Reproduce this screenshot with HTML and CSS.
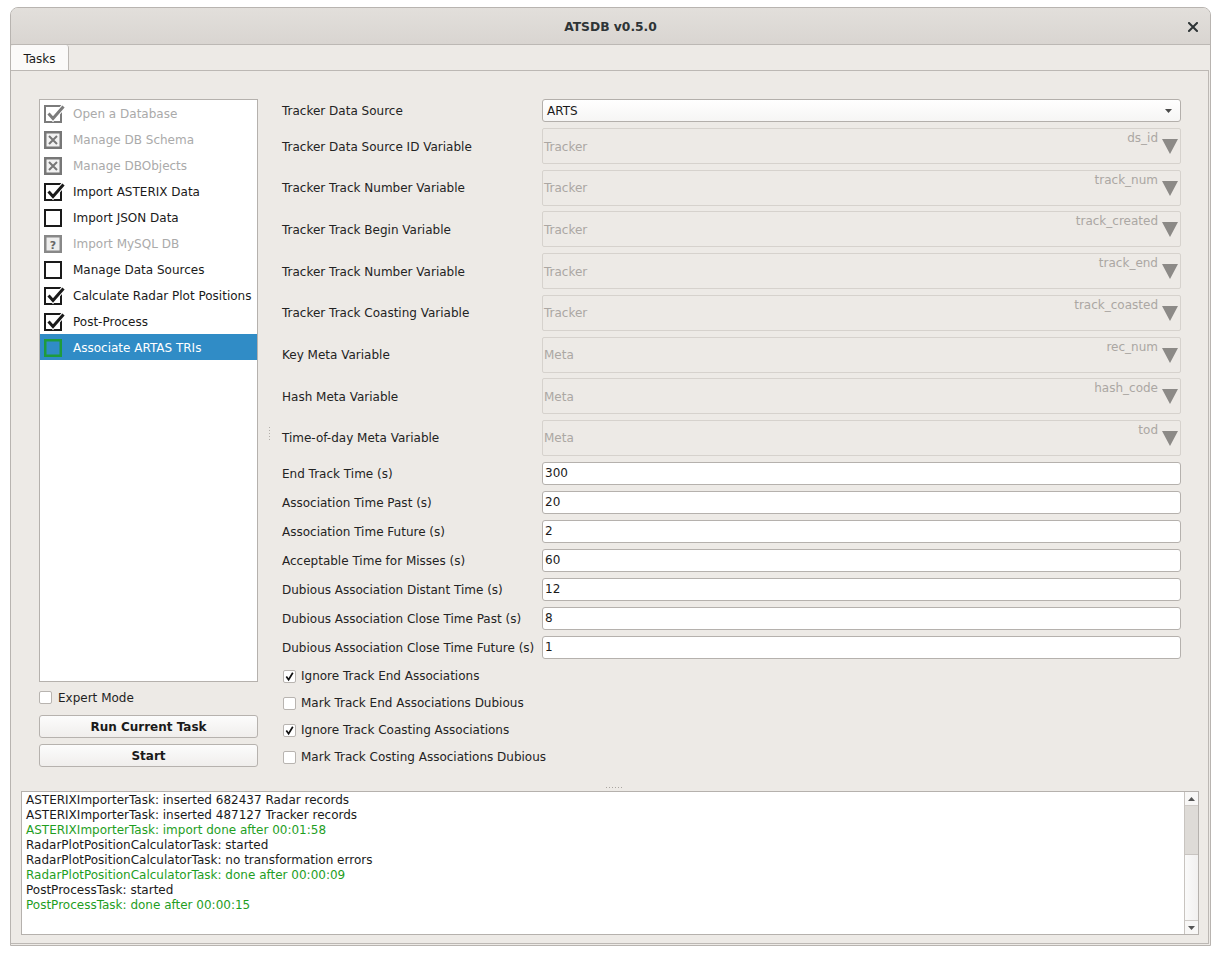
FILE: index.html
```html
<!DOCTYPE html>
<html>
<head>
<meta charset="utf-8">
<title>ATSDB v0.5.0</title>
<link rel="stylesheet" href="styles.css">
</head>
<body>
<div class="window">
  <div class="titlebar">
    <span></span>
    <span class="title">ATSDB v0.5.0</span>
    <span class="close"><svg width="10" height="10" viewBox="0 0 10 10"><path d="M1 1 L9 9 M9 1 L1 9" stroke="#2e3436" stroke-width="2" stroke-linecap="square"/></svg></span>
  </div>
  <div class="tabbar"><div class="tab">Tasks</div></div>
  <div class="pane">
    <div class="upper">
      <div class="leftcol">
        <ul class="tasklist">
          <li class="dis"><svg class="ic" width="22" height="22" viewBox="0 0 22 22"><rect x="1" y="3" width="16" height="16" fill="none" stroke="#7b7b7b" stroke-width="2"/><path d="M4.5 10.5 L9 15.5 L19.5 3.5" fill="none" stroke="#fff" stroke-width="5"/><path d="M4.5 10.5 L9 15.5 L19.5 3.5" fill="none" stroke="#7b7b7b" stroke-width="3"/></svg>Open a Database</li>
          <li class="dis"><svg class="ic" width="22" height="22" viewBox="0 0 22 22"><rect x="1.25" y="3.25" width="15.5" height="15.5" fill="#f2f2f2" stroke="#777" stroke-width="2.5"/><path d="M5 7 L13 15 M13 7 L5 15" stroke="#777" stroke-width="2"/></svg>Manage DB Schema</li>
          <li class="dis"><svg class="ic" width="22" height="22" viewBox="0 0 22 22"><rect x="1.25" y="3.25" width="15.5" height="15.5" fill="#f2f2f2" stroke="#777" stroke-width="2.5"/><path d="M5 7 L13 15 M13 7 L5 15" stroke="#777" stroke-width="2"/></svg>Manage DBObjects</li>
          <li><svg class="ic" width="22" height="22" viewBox="0 0 22 22"><rect x="1" y="3" width="16" height="16" fill="none" stroke="#1a1a1a" stroke-width="2"/><path d="M4.5 10.5 L9 15.5 L19.5 3.5" fill="none" stroke="#fff" stroke-width="5"/><path d="M4.5 10.5 L9 15.5 L19.5 3.5" fill="none" stroke="#1a1a1a" stroke-width="3"/></svg>Import ASTERIX Data</li>
          <li><svg class="ic" width="22" height="22" viewBox="0 0 22 22"><rect x="1" y="3" width="16" height="16" fill="none" stroke="#1a1a1a" stroke-width="2"/></svg>Import JSON Data</li>
          <li class="dis"><svg class="ic" width="22" height="22" viewBox="0 0 22 22"><rect x="1.25" y="3.25" width="15.5" height="15.5" fill="#ededed" stroke="#888" stroke-width="2.5"/><text x="9" y="15.5" text-anchor="middle" font-family="DejaVu Sans, sans-serif" font-weight="bold" font-size="11" fill="#666">?</text></svg>Import MySQL DB</li>
          <li><svg class="ic" width="22" height="22" viewBox="0 0 22 22"><rect x="1" y="3" width="16" height="16" fill="none" stroke="#1a1a1a" stroke-width="2"/></svg>Manage Data Sources</li>
          <li><svg class="ic" width="22" height="22" viewBox="0 0 22 22"><rect x="1" y="3" width="16" height="16" fill="none" stroke="#1a1a1a" stroke-width="2"/><path d="M4.5 10.5 L9 15.5 L19.5 3.5" fill="none" stroke="#fff" stroke-width="5"/><path d="M4.5 10.5 L9 15.5 L19.5 3.5" fill="none" stroke="#1a1a1a" stroke-width="3"/></svg>Calculate Radar Plot Positions</li>
          <li><svg class="ic" width="22" height="22" viewBox="0 0 22 22"><rect x="1" y="3" width="16" height="16" fill="none" stroke="#1a1a1a" stroke-width="2"/><path d="M4.5 10.5 L9 15.5 L19.5 3.5" fill="none" stroke="#fff" stroke-width="5"/><path d="M4.5 10.5 L9 15.5 L19.5 3.5" fill="none" stroke="#1a1a1a" stroke-width="3"/></svg>Post-Process</li>
          <li class="sel"><svg class="ic" width="22" height="22" viewBox="0 0 22 22"><rect x="1.25" y="3.25" width="15.5" height="15.5" fill="none" stroke="#1e9b3c" stroke-width="2.5"/></svg>Associate ARTAS TRIs</li>
        </ul>
        <div class="expert"><span class="cb"></span><span>Expert Mode</span></div>
        <button class="btn">Run Current Task</button>
        <button class="btn">Start</button>
      </div>
      <div class="vsplit"><span class="vdots"></span></div>
      <div class="form">
        <div class="row r-combo">
          <span class="lbl">Tracker Data Source</span>
          <div class="combo"><span>ARTS</span><svg width="7" height="4" viewBox="0 0 7 4"><path d="M0 0 H7 L3.5 4 Z" fill="#4a4a4a"/></svg></div>
        </div>
        <div class="dgroup">
          <div class="row r-dis"><span class="lbl">Tracker Data Source ID Variable</span><div class="dcombo"><span class="ph">Tracker</span><span class="var"><span class="vn">ds_id</span><svg class="tri" width="16" height="15" viewBox="0 0 16 15"><path d="M0 0 H16 L8 15 Z" fill="#8c8a87"/></svg></span></div></div>
          <div class="row r-dis"><span class="lbl">Tracker Track Number Variable</span><div class="dcombo"><span class="ph">Tracker</span><span class="var"><span class="vn">track_num</span><svg class="tri" width="16" height="15" viewBox="0 0 16 15"><path d="M0 0 H16 L8 15 Z" fill="#8c8a87"/></svg></span></div></div>
          <div class="row r-dis"><span class="lbl">Tracker Track Begin Variable</span><div class="dcombo"><span class="ph">Tracker</span><span class="var"><span class="vn">track_created</span><svg class="tri" width="16" height="15" viewBox="0 0 16 15"><path d="M0 0 H16 L8 15 Z" fill="#8c8a87"/></svg></span></div></div>
          <div class="row r-dis"><span class="lbl">Tracker Track Number Variable</span><div class="dcombo"><span class="ph">Tracker</span><span class="var"><span class="vn">track_end</span><svg class="tri" width="16" height="15" viewBox="0 0 16 15"><path d="M0 0 H16 L8 15 Z" fill="#8c8a87"/></svg></span></div></div>
          <div class="row r-dis"><span class="lbl">Tracker Track Coasting Variable</span><div class="dcombo"><span class="ph">Tracker</span><span class="var"><span class="vn">track_coasted</span><svg class="tri" width="16" height="15" viewBox="0 0 16 15"><path d="M0 0 H16 L8 15 Z" fill="#8c8a87"/></svg></span></div></div>
          <div class="row r-dis"><span class="lbl">Key Meta Variable</span><div class="dcombo"><span class="ph">Meta</span><span class="var"><span class="vn">rec_num</span><svg class="tri" width="16" height="15" viewBox="0 0 16 15"><path d="M0 0 H16 L8 15 Z" fill="#8c8a87"/></svg></span></div></div>
          <div class="row r-dis"><span class="lbl">Hash Meta Variable</span><div class="dcombo"><span class="ph">Meta</span><span class="var"><span class="vn">hash_code</span><svg class="tri" width="16" height="15" viewBox="0 0 16 15"><path d="M0 0 H16 L8 15 Z" fill="#8c8a87"/></svg></span></div></div>
          <div class="row r-dis"><span class="lbl">Time-of-day Meta Variable</span><div class="dcombo"><span class="ph">Meta</span><span class="var"><span class="vn">tod</span><svg class="tri" width="16" height="15" viewBox="0 0 16 15"><path d="M0 0 H16 L8 15 Z" fill="#8c8a87"/></svg></span></div></div>
        </div>
        <div class="fgroup">
          <div class="row r-field"><span class="lbl">End Track Time (s)</span><div class="field">300</div></div>
          <div class="row r-field"><span class="lbl">Association Time Past (s)</span><div class="field">20</div></div>
          <div class="row r-field"><span class="lbl">Association Time Future (s)</span><div class="field">2</div></div>
          <div class="row r-field"><span class="lbl">Acceptable Time for Misses (s)</span><div class="field">60</div></div>
          <div class="row r-field"><span class="lbl">Dubious Association Distant Time (s)</span><div class="field">12</div></div>
          <div class="row r-field"><span class="lbl">Dubious Association Close Time Past (s)</span><div class="field">8</div></div>
          <div class="row r-field"><span class="lbl">Dubious Association Close Time Future (s)</span><div class="field">1</div></div>
        </div>
        <div class="cgroup">
          <div class="crow"><span class="cb on"><svg width="11" height="11" viewBox="0 0 11 11"><path d="M2.3 5.6 L4.6 8.8 L8.8 1.8" fill="none" stroke="#111" stroke-width="1.7"/></svg></span><span>Ignore Track End Associations</span></div>
          <div class="crow"><span class="cb"></span><span>Mark Track End Associations Dubious</span></div>
          <div class="crow"><span class="cb on"><svg width="11" height="11" viewBox="0 0 11 11"><path d="M2.3 5.6 L4.6 8.8 L8.8 1.8" fill="none" stroke="#111" stroke-width="1.7"/></svg></span><span>Ignore Track Coasting Associations</span></div>
          <div class="crow"><span class="cb"></span><span>Mark Track Costing Associations Dubious</span></div>
        </div>
      </div>
    </div>
    <div class="hsplit"><span class="hdots"></span></div>
    <div class="log">
      <div class="logtext">
        <div>ASTERIXImporterTask: inserted 682437 Radar records</div>
        <div>ASTERIXImporterTask: inserted 487127 Tracker records</div>
        <div class="ok">ASTERIXImporterTask: import done after 00:01:58</div>
        <div>RadarPlotPositionCalculatorTask: started</div>
        <div>RadarPlotPositionCalculatorTask: no transformation errors</div>
        <div class="ok">RadarPlotPositionCalculatorTask: done after 00:00:09</div>
        <div>PostProcessTask: started</div>
        <div class="ok">PostProcessTask: done after 00:00:15</div>
      </div>
      <div class="vscroll">
        <div class="sbtn"><svg width="7" height="4" viewBox="0 0 7 4"><path d="M0 4 H7 L3.5 0 Z" fill="#555"/></svg></div>
        <div class="thumb"></div>
        <div class="track"></div>
        <div class="sbtn down"><svg width="7" height="4" viewBox="0 0 7 4"><path d="M0 0 H7 L3.5 4 Z" fill="#555"/></svg></div>
      </div>
    </div>
  </div>
</div>
</body>
</html>
```
FILE: styles.css
```css
* { box-sizing: border-box; }
html, body { margin: 0; padding: 0; background: #ffffff; }
body {
  font-family: "DejaVu Sans", "Liberation Sans", sans-serif;
  font-size: 12px;
  color: #1f1f1f;
}
.window {
  margin: 7px 0 0 10px;
  width: 1201px;
  height: 939px;
  border: 1px solid #b8b4b0;
  border-radius: 8px 8px 0 0;
  background: #edeae6;
  display: flex;
  flex-direction: column;
  overflow: hidden;
}
.titlebar {
  height: 37px;
  flex: none;
  display: grid;
  grid-template-columns: 1fr auto 1fr;
  align-items: center;
  background: linear-gradient(#e2dfdb, #d9d5d1);
  border-bottom: 1px solid #bcb8b4;
}
.title { font-weight: bold; font-size: 12.3px; color: #2e3436; padding-top: 1px; }
.close { justify-self: end; padding-right: 12px; display: flex; padding-top: 1px; }
.tabbar { height: 25px; flex: none; display: flex; }
.tab {
  width: 58px;
  background: #fbfaf9;
  border-right: 1px solid #bcb8b4;
  border-radius: 3px 3px 0 0;
  display: flex;
  align-items: center;
  justify-content: center;
  padding-top: 2px;
  color: #1a1a1a;
}
.pane {
  height: 874px;
  flex: none;
  margin-right: 1px;
  border-top: 1px solid #bcb8b4;
  border-right: 1px solid #bcb8b4;
  border-bottom: 1px solid #bcb8b4;
  display: flex;
  flex-direction: column;
}
.upper {
  height: 714px;
  flex: none;
  display: flex;
  padding: 28px 0 0 28px;
}
.leftcol { width: 219px; flex: none; display: flex; flex-direction: column; }
.tasklist {
  list-style: none;
  margin: 0;
  padding: 0;
  height: 583px;
  border: 1px solid #b5b1ad;
  background: #fff;
}
.tasklist li {
  height: 26px;
  display: flex;
  align-items: center;
  padding-left: 4px;
  padding-top: 2px;
  color: #1a1a1a;
  white-space: nowrap;
}
.tasklist li .ic { margin-right: 7px; flex: none; margin-top: -1px; }
.tasklist li.dis { color: #aaaaaa; }
.tasklist li.sel { background: #308cc6; color: #ffffff; }
.expert { display: flex; align-items: center; height: 13px; margin-top: 9px; }
.expert span:last-child { margin-left: 6px; }
.cb {
  width: 13px;
  height: 13px;
  flex: none;
  border: 1px solid #b8b4b0;
  border-radius: 2px;
  background: #fff;
  display: flex;
  align-items: center;
  justify-content: center;
}
.btn {
  height: 23px;
  width: 219px;
  border: 1px solid #b6b2ae;
  border-radius: 3px;
  background: linear-gradient(#fcfcfc, #f0eeec);
  font-family: inherit;
  font-size: 12px;
  font-weight: bold;
  color: #1a1a1a;
  padding: 0;
  margin-top: 6px;
}
.expert + .btn { margin-top: 11px; }
.vsplit { width: 24px; flex: none; display: flex; justify-content: center; padding-top: 328px; }
.vdots {
  width: 1px;
  height: 15px;
  margin-left: -1px;
  background: repeating-linear-gradient(to bottom, #b3afaa 0 1px, transparent 1px 3px);
}
.form { width: 899px; flex: none; display: flex; flex-direction: column; }
.row { display: grid; grid-template-columns: 260px 639px; align-items: center; }
.lbl { white-space: nowrap; color: #232323; padding-top: 1px; }
.r-combo { height: 23px; }
.combo {
  height: 23px;
  border: 1px solid #b3afab;
  border-radius: 3px;
  background: linear-gradient(#ffffff, #f6f5f4);
  display: flex;
  align-items: center;
  justify-content: space-between;
  padding: 0 8px 0 4px;
  color: #1a1a1a;
}
.dgroup { display: flex; flex-direction: column; gap: 5.714px; margin-top: 6px; }
.r-dis { height: 36px; }
.dcombo {
  height: 36px;
  border: 1px solid #d6d2cd;
  border-radius: 2px;
  display: flex;
  justify-content: space-between;
  align-items: center;
  padding: 1px 2px 0 1px;
}
.ph { color: #aba7a3; }
.var { align-self: stretch; display: flex; align-items: flex-start; padding-top: 1px; }
.vn { color: #aba7a3; line-height: 14px; }
.tri { margin-left: 4px; margin-top: 8px; }
.fgroup { display: flex; flex-direction: column; gap: 6px; margin-top: 6px; }
.r-field { height: 23px; }
.field {
  height: 23px;
  border: 1px solid #b5b1ad;
  border-radius: 3px;
  background: #fff;
  display: flex;
  align-items: center;
  padding-left: 2px;
  color: #1a1a1a;
}
.cgroup { display: flex; flex-direction: column; margin-top: 3px; }
.crow { height: 27px; display: flex; align-items: center; padding-left: 1px; padding-top: 2px; color: #232323; }
.crow span:last-child { margin-left: 5px; }
.hsplit { height: 6px; flex: none; display: flex; justify-content: center; align-items: center; }
.hdots {
  width: 17px;
  height: 1px;
  margin-left: 10px;
  margin-top: -1px;
  background: repeating-linear-gradient(to right, #aaa6a1 0 1px, transparent 1px 3px);
}
.log {
  height: 144px;
  flex: none;
  margin: 0 9px 0 10px;
  border: 1px solid #b5b1ad;
  background: #fff;
  display: flex;
}
.logtext { flex: 1; padding: 1px 4px; line-height: 15px; color: #1a1a1a; white-space: nowrap; }
.logtext .ok { color: #1f9e1f; }
.vscroll {
  width: 14px;
  flex: none;
  border-left: 1px solid #c8c4c0;
  display: flex;
  flex-direction: column;
  background: #f6f5f4;
}
.sbtn {
  height: 14px;
  flex: none;
  display: flex;
  align-items: center;
  justify-content: center;
  background: #f8f7f6;
  border-bottom: 1px solid #cfcbc7;
}
.sbtn.down { border-bottom: none; border-top: 1px solid #cfcbc7; }
.thumb { height: 49px; flex: none; background: #dedbd7; border-bottom: 1px solid #c8c4c0; }
.track { flex: 1; background: linear-gradient(to right, #fafafa, #f1f0ef); }
```
